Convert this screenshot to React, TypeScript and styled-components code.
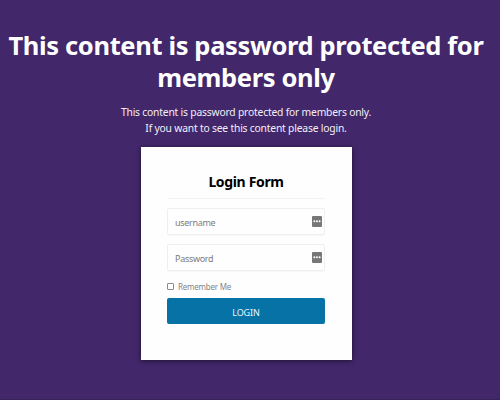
import React from "react";
import styled, { createGlobalStyle } from "styled-components";

const GlobalStyle = createGlobalStyle`
  *, *::before, *::after { box-sizing: border-box; }
  body {
    margin: 0;
    background: #42276a;
    font-family: "Noto Sans", "Open Sans", sans-serif;
  }
`;

const Page = styled.main`
  width: 500px;
  height: 400px;
  padding: 29px 8px 0 0;
  overflow: hidden;
  display: flex;
  flex-direction: column;
  align-items: center;
  background: #42276a;
  border-bottom: 1px solid #37245a;
`;

const Title = styled.h1`
  margin: 0;
  color: #fff;
  font-size: 25.5px;
  font-weight: 700;
  line-height: 32px;
  letter-spacing: -0.36px;
  text-align: center;
  white-space: nowrap;
`;

const Intro = styled.p`
  margin: 11px 0 0;
  color: #f3eff8;
  font-size: 10.3px;
  line-height: 16px;
  letter-spacing: -0.19px;
  text-align: center;
  white-space: nowrap;
`;

const Card = styled.form`
  width: 211px;
  height: 213px;
  margin-top: 11px;
  padding: 20px 26.5px 0;
  display: flex;
  flex-direction: column;
  background: #fefefe;
  box-shadow: 0 1px 5px rgba(0, 0, 0, 0.55);
`;

const CardTitle = styled.h2`
  margin: 0 0 9px;
  height: 32px;
  border-bottom: 1px solid #f3f3f3;
  color: #000;
  font-size: 14px;
  font-weight: 700;
  line-height: 30px;
  letter-spacing: -0.35px;
  text-align: center;
`;

const Field = styled.label`
  height: 27px;
  margin-bottom: 9px;
  padding: 0 2px 0 7px;
  display: flex;
  align-items: center;
  border: 1px solid #efefef;
  border-radius: 2px;
  box-shadow: 0 1px 1px rgba(0, 0, 0, 0.03);
`;

const Input = styled.input`
  flex: 1;
  min-width: 0;
  height: 17px;
  padding: 1px 0 0;
  border: 0;
  outline: 0;
  background: transparent;
  font: 9px/16px "Noto Sans", "Open Sans", sans-serif;
  letter-spacing: -0.3px;
  &::placeholder { color: #7c7c7c; opacity: 1; }
`;

const Remember = styled.label`
  height: 12px;
  display: flex;
  align-items: center;
  gap: 4px;
  color: #858585;
  font-size: 8px;
  letter-spacing: -0.22px;
`;

const Checkbox = styled.input`
  appearance: none;
  width: 7px;
  height: 7px;
  margin: 0;
  border: 1px solid #8a8a8a;
  border-radius: 1px;
  background: #fff;
`;

const LoginButton = styled.button`
  height: 26px;
  margin-top: 6px;
  padding: 3px 0 0;
  border: 0;
  border-radius: 2px;
  background: #0672a6;
  color: #e9f6fc;
  font: 9px/22px "Noto Sans", "Open Sans", sans-serif;
  letter-spacing: -0.15px;
`;

const KeyIcon = () => (
  <svg width="10" height="11" viewBox="0 0 10 11" aria-hidden="true">
    <rect width="10" height="11" rx="1" fill="#777" />
    <circle cx="2.4" cy="5.3" r="1" fill="#fff" />
    <circle cx="5" cy="5.3" r="1" fill="#fff" />
    <circle cx="7.6" cy="5.3" r="1" fill="#fff" />
  </svg>
);

export default function App() {
  return (
    <>
      <GlobalStyle />
      <Page>
        <Title>
          This content is password protected for
          <br />
          members only
        </Title>
        <Intro>
          This content is password protected for members only.
          <br />
          If you want to see this content please login.
        </Intro>
        <Card>
          <CardTitle>Login Form</CardTitle>
          <Field>
            <Input type="text" placeholder="username" />
            <KeyIcon />
          </Field>
          <Field>
            <Input type="password" placeholder="Password" />
            <KeyIcon />
          </Field>
          <Remember>
            <Checkbox type="checkbox" />
            Remember Me
          </Remember>
          <LoginButton type="button">LOGIN</LoginButton>
        </Card>
      </Page>
    </>
  );
}
